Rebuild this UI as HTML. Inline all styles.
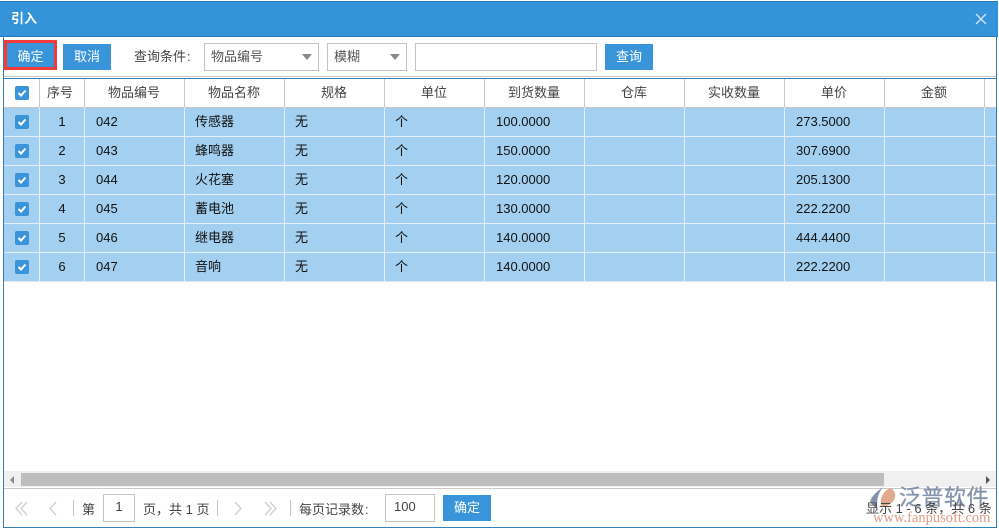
<!DOCTYPE html>
<html><head><meta charset="utf-8">
<style>
html,body{margin:0;padding:0;background:#fff;}
body{width:999px;height:530px;position:relative;overflow:hidden;font-family:"Liberation Sans","Noto Sans CJK SC",sans-serif;font-size:13px;color:#333;}
.a{position:absolute;}
.t{position:absolute;white-space:nowrap;line-height:18px;height:18px;}
.btn{position:absolute;background:#3a94d9;color:#fff;text-align:center;height:26px;line-height:25px;font-size:13px;}
.box{position:absolute;border:1px solid #c4c4c4;box-sizing:border-box;background:#fff;}
.arrow{position:absolute;width:0;height:0;border-left:5px solid transparent;border-right:5px solid transparent;border-top:6px solid #8c8c8c;}
.v{position:absolute;width:1px;background:#c8c8c8;top:79px;height:28px;}
.rv{position:absolute;width:1px;background:#e4eef6;top:107px;height:174px;}
.h{position:absolute;height:1px;left:4px;width:992px;background:#e4eef6;}
.hd{position:absolute;top:84px;height:18px;line-height:18px;text-align:center;color:#444;width:100px;}
.c{position:absolute;height:18px;line-height:18px;color:#111;white-space:nowrap;}
.cb{position:absolute;left:15px;width:14px;height:14px;background:#3a94d9;border-radius:2px;}
.cb svg{position:absolute;left:0;top:0;}
</style></head><body>
<div class="a" style="left:0;top:1px;width:998px;height:36px;background:#3593da;border-top:1px solid #2a78b5;border-bottom:1px solid #2a78b5;box-sizing:border-box;"></div>
<div class="a" style="left:3px;top:37px;width:1px;height:491px;background:#2f7fb8;"></div>
<div class="a" style="left:996px;top:37px;width:1px;height:491px;background:#2f7fb8;"></div>
<div class="a" style="left:3px;top:527px;width:994px;height:1px;background:#2f7fb8;"></div>
<div class="t" style="left:11px;top:10px;color:#fff;font-weight:bold;font-size:13px;">引入</div>
<svg class="a" style="left:975px;top:13px" width="12" height="12"><path d="M1 1L11 11M11 1L1 11" stroke="#cfe4f5" stroke-width="1.4" fill="none"/></svg>

<div class="a" style="left:4px;top:40px;width:53px;height:30px;border:3px solid #f23a3a;box-sizing:border-box;"></div>
<div class="btn" style="left:7px;top:43px;width:47px;height:24px;line-height:27px;">确定</div>
<div class="btn" style="left:63px;top:44px;width:48px;">取消</div>
<div class="t" style="left:134px;top:48px;color:#444;">查询条件<span style="margin-left:1px">:</span></div>
<div class="box" style="left:204px;top:43px;width:115px;height:28px;"></div>
<div class="t" style="left:211px;top:48px;color:#555;">物品编号</div>
<div class="arrow" style="left:302px;top:54px;"></div>
<div class="box" style="left:327px;top:43px;width:80px;height:28px;"></div>
<div class="t" style="left:334px;top:48px;color:#555;">模糊</div>
<div class="arrow" style="left:390px;top:54px;"></div>
<div class="box" style="left:415px;top:43px;width:182px;height:28px;"></div>
<div class="btn" style="left:605px;top:44px;width:48px;">查询</div>

<div class="a" style="left:4px;top:76px;width:992px;height:1px;background:#c8c8c8;"></div>
<div class="a" style="left:3px;top:78px;width:994px;height:1px;background:#2f7fb8;"></div>
<div class="a" style="left:4px;top:107px;width:992px;height:1px;background:#c8c8c8;"></div>
<div class="a" style="left:4px;top:108px;width:992px;height:173px;background:#a3d0f1;"></div>
<div class="a" style="left:4px;top:281px;width:992px;height:1px;background:#dfe9f1;"></div>

<div class="v" style="left:39px"></div><div class="v" style="left:84px"></div><div class="v" style="left:184px"></div><div class="v" style="left:284px"></div><div class="v" style="left:384px"></div><div class="v" style="left:484px"></div><div class="v" style="left:584px"></div><div class="v" style="left:684px"></div><div class="v" style="left:784px"></div><div class="v" style="left:884px"></div><div class="v" style="left:984px"></div>
<div class="rv" style="left:39px"></div><div class="rv" style="left:84px"></div><div class="rv" style="left:184px"></div><div class="rv" style="left:284px"></div><div class="rv" style="left:384px"></div><div class="rv" style="left:484px"></div><div class="rv" style="left:584px"></div><div class="rv" style="left:684px"></div><div class="rv" style="left:784px"></div><div class="rv" style="left:884px"></div><div class="rv" style="left:984px"></div>
<div class="h" style="top:136px"></div><div class="h" style="top:165px"></div><div class="h" style="top:194px"></div><div class="h" style="top:223px"></div><div class="h" style="top:252px"></div>

<div class="hd" style="left:38px;width:44px">序号</div>
<div class="hd" style="left:84px">物品编号</div>
<div class="hd" style="left:184px">物品名称</div>
<div class="hd" style="left:284px">规格</div>
<div class="hd" style="left:384px">单位</div>
<div class="hd" style="left:484px">到货数量</div>
<div class="hd" style="left:584px">仓库</div>
<div class="hd" style="left:684px">实收数量</div>
<div class="hd" style="left:784px">单价</div>
<div class="hd" style="left:884px">金额</div>

<div class="cb" style="top:86px"><svg width="14" height="14"><path d="M3.5 7L6 9.5L10.5 4.5" stroke="#fff" stroke-width="2" fill="none"/></svg></div>

<div class="cb" style="top:115px"><svg width="14" height="14"><path d="M3.5 7L6 9.5L10.5 4.5" stroke="#fff" stroke-width="2" fill="none"/></svg></div>
<div class="c" style="left:40px;width:44px;text-align:center;top:113px">1</div><div class="c" style="left:96px;top:113px">042</div><div class="c" style="left:195px;top:113px">传感器</div><div class="c" style="left:295px;top:113px">无</div><div class="c" style="left:395px;top:113px">个</div><div class="c" style="left:496px;top:113px">100.0000</div><div class="c" style="left:796px;top:113px">273.5000</div>

<div class="cb" style="top:144px"><svg width="14" height="14"><path d="M3.5 7L6 9.5L10.5 4.5" stroke="#fff" stroke-width="2" fill="none"/></svg></div>
<div class="c" style="left:40px;width:44px;text-align:center;top:142px">2</div><div class="c" style="left:96px;top:142px">043</div><div class="c" style="left:195px;top:142px">蜂鸣器</div><div class="c" style="left:295px;top:142px">无</div><div class="c" style="left:395px;top:142px">个</div><div class="c" style="left:496px;top:142px">150.0000</div><div class="c" style="left:796px;top:142px">307.6900</div>

<div class="cb" style="top:173px"><svg width="14" height="14"><path d="M3.5 7L6 9.5L10.5 4.5" stroke="#fff" stroke-width="2" fill="none"/></svg></div>
<div class="c" style="left:40px;width:44px;text-align:center;top:171px">3</div><div class="c" style="left:96px;top:171px">044</div><div class="c" style="left:195px;top:171px">火花塞</div><div class="c" style="left:295px;top:171px">无</div><div class="c" style="left:395px;top:171px">个</div><div class="c" style="left:496px;top:171px">120.0000</div><div class="c" style="left:796px;top:171px">205.1300</div>

<div class="cb" style="top:202px"><svg width="14" height="14"><path d="M3.5 7L6 9.5L10.5 4.5" stroke="#fff" stroke-width="2" fill="none"/></svg></div>
<div class="c" style="left:40px;width:44px;text-align:center;top:200px">4</div><div class="c" style="left:96px;top:200px">045</div><div class="c" style="left:195px;top:200px">蓄电池</div><div class="c" style="left:295px;top:200px">无</div><div class="c" style="left:395px;top:200px">个</div><div class="c" style="left:496px;top:200px">130.0000</div><div class="c" style="left:796px;top:200px">222.2200</div>

<div class="cb" style="top:231px"><svg width="14" height="14"><path d="M3.5 7L6 9.5L10.5 4.5" stroke="#fff" stroke-width="2" fill="none"/></svg></div>
<div class="c" style="left:40px;width:44px;text-align:center;top:229px">5</div><div class="c" style="left:96px;top:229px">046</div><div class="c" style="left:195px;top:229px">继电器</div><div class="c" style="left:295px;top:229px">无</div><div class="c" style="left:395px;top:229px">个</div><div class="c" style="left:496px;top:229px">140.0000</div><div class="c" style="left:796px;top:229px">444.4400</div>

<div class="cb" style="top:260px"><svg width="14" height="14"><path d="M3.5 7L6 9.5L10.5 4.5" stroke="#fff" stroke-width="2" fill="none"/></svg></div>
<div class="c" style="left:40px;width:44px;text-align:center;top:258px">6</div><div class="c" style="left:96px;top:258px">047</div><div class="c" style="left:195px;top:258px">音响</div><div class="c" style="left:295px;top:258px">无</div><div class="c" style="left:395px;top:258px">个</div><div class="c" style="left:496px;top:258px">140.0000</div><div class="c" style="left:796px;top:258px">222.2200</div>

<!-- scrollbar -->
<div class="a" style="left:4px;top:471px;width:992px;height:16px;background:#f0f0f0;"></div>
<div class="a" style="left:21px;top:473px;width:863px;height:13px;background:#bebebe;"></div>
<div class="a" style="left:10px;top:476px;width:0;height:0;border-top:4px solid transparent;border-bottom:4px solid transparent;border-right:4px solid #888;"></div>
<div class="a" style="left:986px;top:476px;width:0;height:0;border-top:4px solid transparent;border-bottom:4px solid transparent;border-left:4px solid #555;"></div>
<div class="a" style="left:4px;top:488px;width:992px;height:1px;background:#c8c8c8;"></div>

<!-- pager -->
<svg class="a" style="left:0;top:490px" width="290" height="36" fill="none" stroke="#d2d2d2" stroke-width="1.4">
<path d="M22 12L16 18.5L22 25M27 12L21 18.5L27 25"/>
<path d="M56 12L50 18.5L56 25"/>
<path d="M235 12L241 18.5L235 25"/>
<path d="M265 12L271 18.5L265 25M270 12L276 18.5L270 25"/>
</svg>
<div class="a" style="left:73px;top:500px;width:1px;height:16px;background:#c4c4c4;"></div>
<div class="t" style="left:82px;top:501px;color:#444;">第</div>
<div class="box" style="left:103px;top:494px;width:32px;height:28px;text-align:center;line-height:24px;color:#444;">1</div>
<div class="t" style="left:143px;top:501px;color:#444;">页，共 1 页</div>
<div class="a" style="left:217px;top:500px;width:1px;height:16px;background:#c4c4c4;"></div>
<div class="a" style="left:290px;top:500px;width:1px;height:16px;background:#c4c4c4;"></div>
<div class="t" style="left:299px;top:501px;color:#444;">每页记录数<span style="margin-left:1px">:</span></div>
<div class="box" style="left:385px;top:494px;width:50px;height:28px;line-height:24px;padding-left:8px;color:#444;">100</div>
<div class="btn" style="left:443px;top:495px;width:48px;">确定</div>

<!-- watermark -->
<svg class="a" style="left:870px;top:486px" width="30" height="34">
<path d="M13 1C6 6 1 11 0 16L8 25C6 17 7 9 13 1Z" fill="#8494ad"/>
<path d="M20 2C26 4 26 11 24 14C22 18 17 20 12 21C9 14 12 6 20 2Z" fill="#e3a98f"/>
</svg>
<div class="t" style="left:899px;top:484px;font-size:22px;line-height:28px;height:28px;color:#8494ad;letter-spacing:.5px;-webkit-text-stroke:.3px #8494ad;">泛普软件</div>
<div class="t" style="left:873px;top:511px;font-family:'Liberation Serif',serif;font-size:14.5px;line-height:14px;height:14px;color:#dd9c8c;">www.fanpusoft.com</div>
<div class="t" style="left:866px;top:500px;color:#444;">显示 1 - 6 条，共 6 条</div>
</body></html>
